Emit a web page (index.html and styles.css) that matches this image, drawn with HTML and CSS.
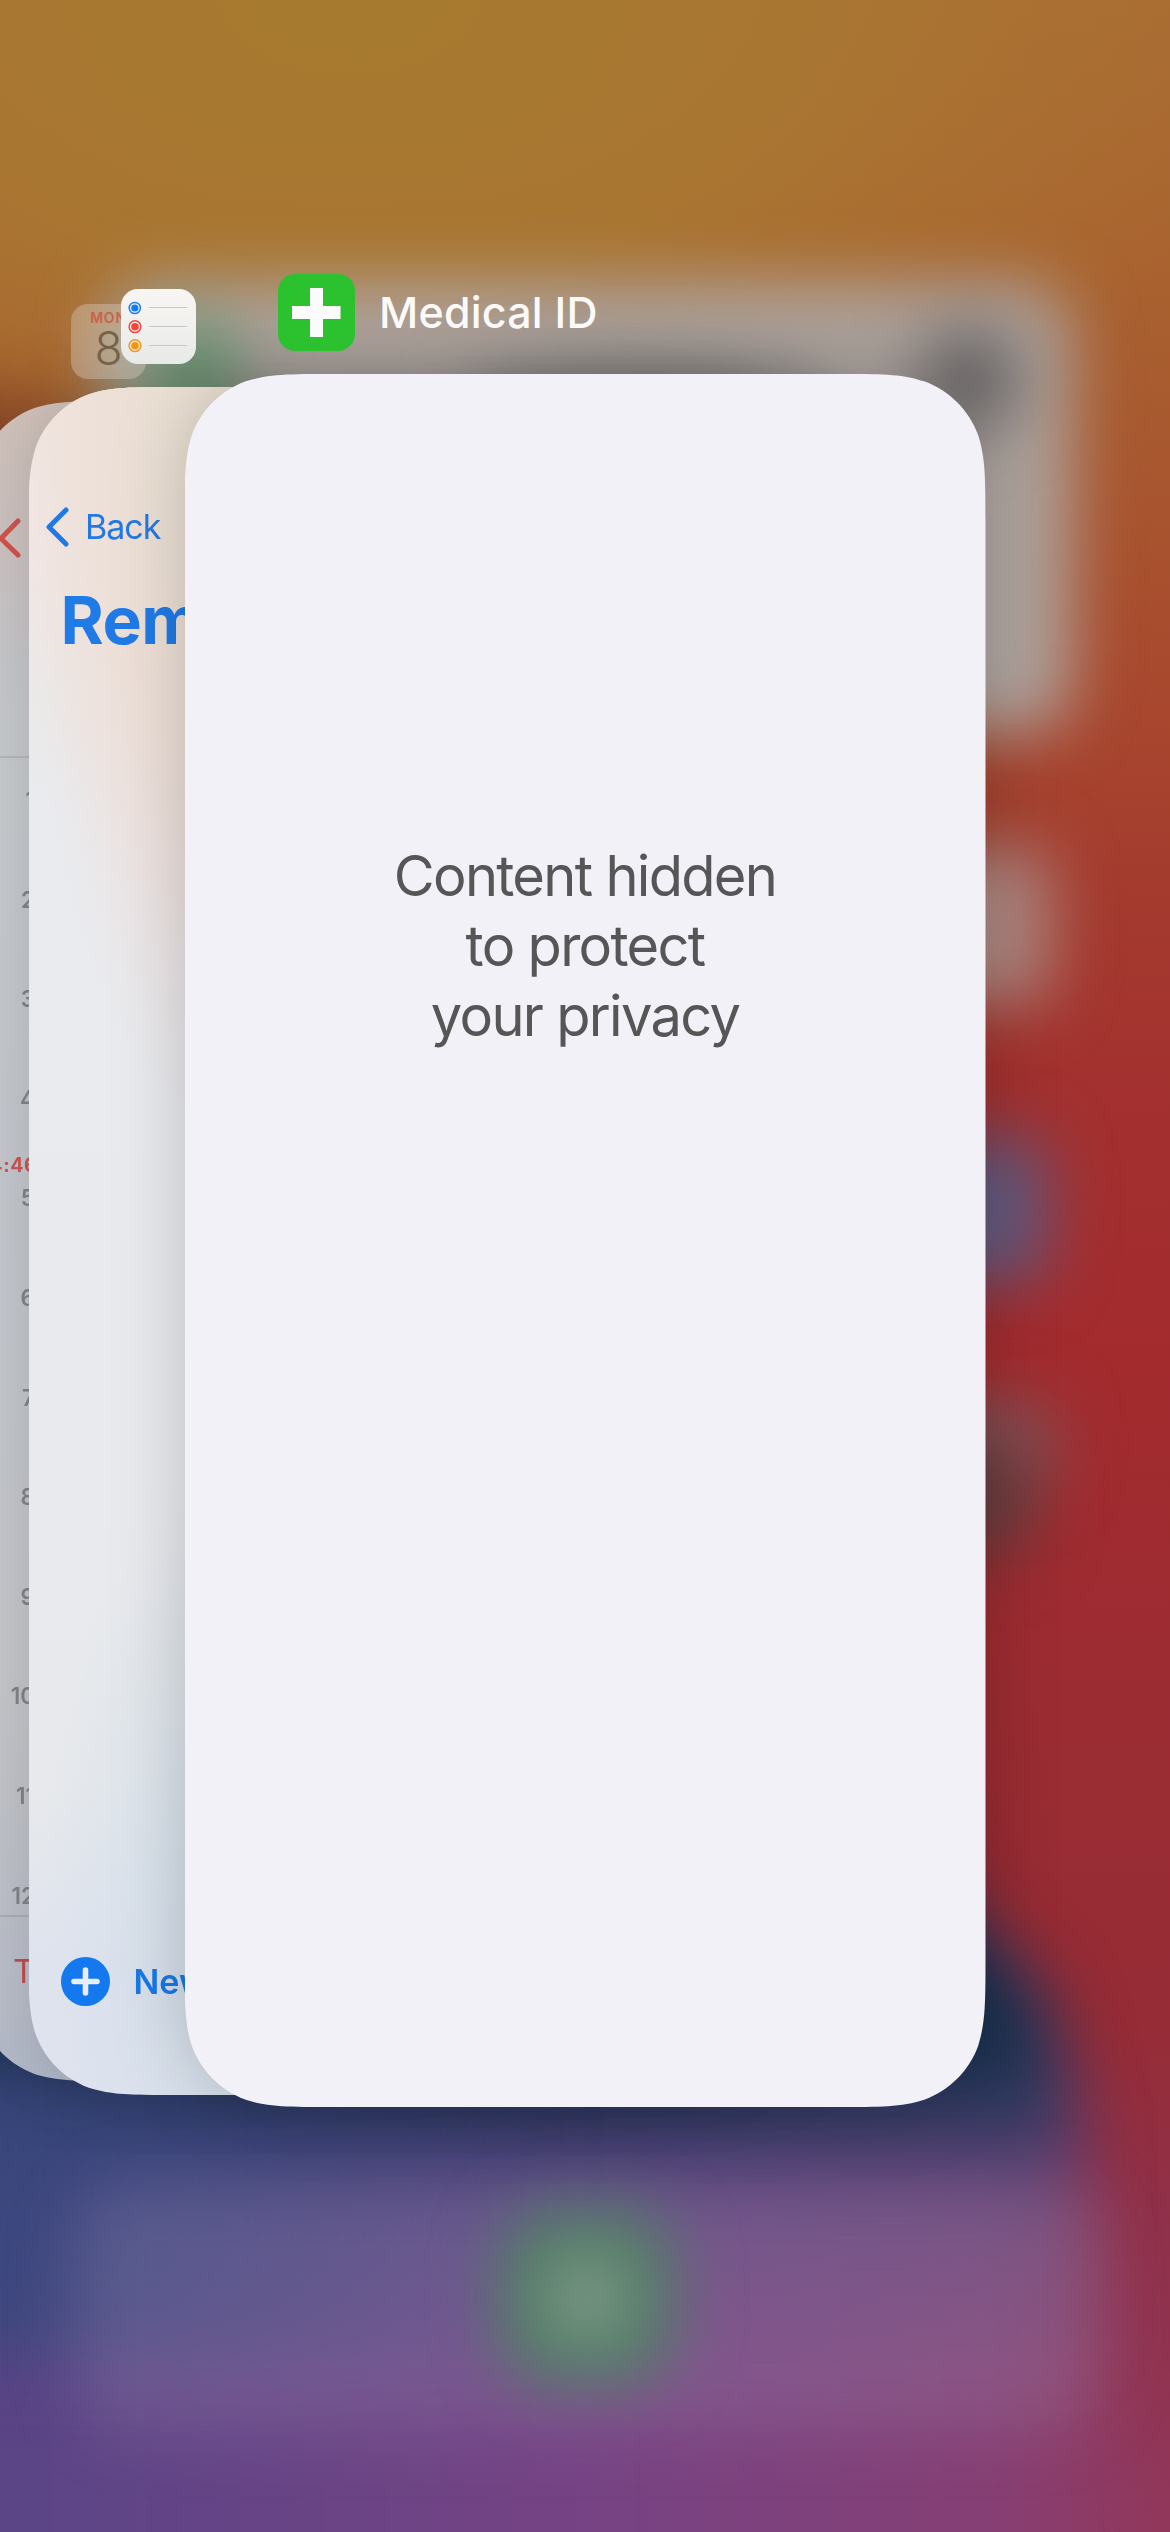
FILE: index.html
```html
<!DOCTYPE html>
<html lang="en">
<head>
<meta charset="utf-8">
<title>App Switcher</title>
<link rel="stylesheet" href="styles.css">
</head>
<body>
<main class="switcher">
  <svg class="wallpaper" viewBox="0 0 1170 2532" aria-hidden="true">
    <defs>
      <clipPath id="card-shape" clipPathUnits="objectBoundingBox">
        <path transform="scale(.00124844 .00057703)" d="M148.3 0H652.7C695.4 0 716.8 0 736 6.4L739.7 7.3C764.8 16.4 784.6 36.2 793.7 61.3C801 84.2 801 105.6 801 148.3V1584.7C801 1627.4 801 1648.8 793.7 1671.7C784.6 1696.8 764.8 1716.6 739.7 1725.7C716.8 1733 695.4 1733 652.7 1733H148.3C105.6 1733 84.2 1733 61.3 1725.7C36.2 1716.6 16.4 1696.8 7.3 1671.7C0 1648.8 0 1627.4 0 1584.7V148.3C0 105.6 0 84.2 7.3 61.3C16.4 36.2 36.2 16.4 61.3 7.3C84.2 0 105.6 0 148.3 0Z"/>
      </clipPath>
      <filter id="soft" x="-100%" y="-100%" width="300%" height="300%" color-interpolation-filters="sRGB"><feGaussianBlur stdDeviation="32"/></filter>
      <filter id="softer" x="-50%" y="-50%" width="200%" height="200%" color-interpolation-filters="sRGB"><feGaussianBlur stdDeviation="34"/></filter>
      <linearGradient id="base" x1="0" y1="0" x2="0" y2="1">
        <stop offset="0" stop-color="#a96c33"/><stop offset=".1" stop-color="#a9632f"/><stop offset=".2" stop-color="#a8552f"/><stop offset=".28" stop-color="#a8472e"/><stop offset=".35" stop-color="#a43b2e"/><stop offset=".43" stop-color="#a3312f"/><stop offset=".54" stop-color="#a32b2e"/><stop offset=".66" stop-color="#9c2c32"/><stop offset=".8" stop-color="#962c36"/><stop offset=".88" stop-color="#90314b"/><stop offset="1" stop-color="#923759"/>
      </linearGradient>
      <radialGradient id="gold" gradientUnits="userSpaceOnUse" cx="0" cy="0" r="1" gradientTransform="translate(350 0) scale(940 560)">
        <stop offset="0" stop-color="#a67b2f"/><stop offset=".5" stop-color="#a97732" stop-opacity=".9"/><stop offset="1" stop-color="#aa7333" stop-opacity="0"/>
      </radialGradient>
      <linearGradient id="floor" gradientUnits="userSpaceOnUse" x1="0" y1="0" x2="1170" y2="0">
        <stop offset="0" stop-color="#5a4587"/><stop offset=".5" stop-color="#764384"/><stop offset=".85" stop-color="#863f74"/><stop offset="1" stop-color="#923759"/>
      </linearGradient>
      <linearGradient id="dusk" gradientUnits="userSpaceOnUse" x1="0" y1="2030" x2="0" y2="2400">
        <stop offset="0" stop-color="#15304c"/><stop offset=".2" stop-color="#24385c" stop-opacity=".9"/><stop offset=".45" stop-color="#37467a" stop-opacity=".38"/><stop offset="1" stop-color="#40477c" stop-opacity="0"/>
      </linearGradient>
      <linearGradient id="blue" gradientUnits="userSpaceOnUse" x1="0" y1="0" x2="560" y2="0">
        <stop offset="0" stop-color="#39487e" stop-opacity=".85"/><stop offset="1" stop-color="#39487e" stop-opacity="0"/>
      </linearGradient>
    </defs>
    <rect width="1170" height="2532" fill="url(#base)"/>
    <rect width="1170" height="600" fill="url(#gold)"/>
    <ellipse cx="-40" cy="530" rx="120" ry="140" fill="#743523" filter="url(#softer)" opacity=".65"/>
    <path d="M-150 1700H860L945 1915L1030 2010L1072 2120L1095 2400L1330 2700H-150Z" fill="url(#floor)" filter="url(#softer)"/>
    <path d="M-150 1700H870L945 1895L1044 1995L1076 2110L1095 2500H-150Z" fill="url(#dusk)" filter="url(#softer)"/>
    <rect x="-200" y="2060" width="760" height="290" fill="url(#blue)" filter="url(#softer)"/>
    <g filter="url(#soft)">
      <rect x="72" y="2182" width="1036" height="250" rx="60" fill="#a89fc0" fill-opacity=".22"/>
    </g>
    <rect x="500" y="2210" width="172" height="172" rx="50" fill="#4e8062" filter="url(#soft)"/>
    <circle cx="587" cy="2298" r="44" fill="#929f99" opacity=".75" filter="url(#soft)"/>
    <rect x="106" y="284" width="964" height="450" rx="50" fill="#aea5a0" filter="url(#soft)"/>
    <circle cx="190" cy="370" r="54" fill="#64906d" filter="url(#soft)"/>
    <ellipse cx="650" cy="398" rx="190" ry="40" fill="#827f7c" filter="url(#soft)"/>
    <circle cx="970" cy="378" r="54" fill="#696566" filter="url(#soft)"/>
    <rect x="900" y="848" width="150" height="156" rx="30" fill="#ab8882" filter="url(#soft)"/>
    <rect x="880" y="1138" width="166" height="145" rx="30" fill="#5f5a80" filter="url(#soft)"/>
    <rect x="880" y="1400" width="174" height="90" rx="30" fill="#855358" filter="url(#soft)"/>
    <rect x="880" y="1445" width="152" height="112" rx="30" fill="#633c3e" filter="url(#soft)"/>
  </svg>

  <section class="layer layer-back">
    <div class="card calendar">
      <header class="cal-nav">
        <svg class="chevron" viewBox="0 0 24 40"><path d="M21 3L4 20.500L21 37"/></svg>
      </header>
      <ol class="hours">
        <li>1</li><li>2</li><li>3</li><li>4</li><li>5</li><li>6</li><li>7</li><li>8</li><li>9</li><li>10</li><li>11</li><li>12</li>
      </ol>
      <span class="now">4:46</span>
      <footer class="cal-foot">Today</footer>
    </div>
  </section>

  <section class="layer layer-mid">
    <div class="card reminders">
      <header class="rem-nav">
        <svg class="chevron" viewBox="0 0 24 40"><path d="M21 3L4 20L21 37"/></svg>
        <span>Back</span>
      </header>
      <h1 class="rem-title">Reminders</h1>
      <footer class="rem-foot">
        <svg class="plus" viewBox="0 0 49 49"><circle cx="24.500" cy="24.500" r="24.500" fill="#1479ee"/><path d="M13 24.500H36M24.500 13V36" stroke="#e9eef6" stroke-width="5.600" stroke-linecap="round"/></svg>
        <span>New Reminder</span>
      </footer>
    </div>
  </section>

  <section class="layer layer-front">
    <div class="card privacy">
      <p>Content hidden<br>to protect<br>your privacy</p>
    </div>
  </section>

  <div class="app-icon icon-calendar"><span class="weekday">MON</span><span class="day">8</span></div>
  <svg class="app-icon icon-reminders" viewBox="0 0 75 75" aria-hidden="true">
    <defs><linearGradient id="paper" x1="0" y1="0" x2="0" y2="1"><stop offset="0" stop-color="#f8f6f3"/><stop offset="1" stop-color="#e8eae8"/></linearGradient></defs>
    <rect width="75" height="75" rx="17" fill="url(#paper)"/>
    <g fill="none" stroke-width="1.500">
      <circle cx="13.800" cy="19" r="5.600" stroke="#1a7df2"/><circle cx="14" cy="37.700" r="5.900" stroke="#f04840"/><circle cx="14" cy="56.700" r="5.900" stroke="#ee9820"/>
    </g>
    <circle cx="13.800" cy="19" r="3.600" fill="#0f7df8"/><circle cx="14" cy="37.700" r="3.800" fill="#fa4236"/><circle cx="14" cy="56.700" r="3.800" fill="#f59412"/>
    <path d="M28 18.500H66M28 37.500H66M28 56.500H66" stroke="#c6c8c9" stroke-width="1.100"/>
  </svg>
  <header class="app-label">
    <svg class="medical" viewBox="0 0 77 77" aria-hidden="true">
      <rect width="77" height="77" rx="17" fill="#2cc22f"/>
      <path d="M32 14H45V32H62.500V45H45V63H32V45H14V32H32Z" fill="#fbfbfb"/>
    </svg>
    <span>Medical ID</span>
  </header>
</main>
</body>
</html>
```
FILE: styles.css
```css
* { box-sizing: border-box; }
body { margin: 0; font-family: Inter, "Liberation Sans", sans-serif; }
.switcher { position: relative; width: 1170px; height: 2532px; overflow: hidden; }
.wallpaper { display: block; width: 100%; height: 100%; }

/* Overlapping deck of app cards */
.layer { position: absolute; }
.layer-back { left: -25px; top: 401px; width: 777px; height: 1680px; filter: drop-shadow(0 0 36px rgba(0,0,0,.13)); }
.layer-mid { left: 28.500px; top: 387px; width: 789px; height: 1708px; filter: drop-shadow(0 0 30px rgba(0,0,0,.13)); }
.layer-front { left: 184.500px; top: 374px; width: 801px; height: 1733px; filter: drop-shadow(0 0 36px rgba(0,0,0,.2)); }
.card { width: 100%; height: 100%; display: flex; flex-direction: column; clip-path: url(#card-shape); }
.chevron { width: 24px; height: 40px; fill: none; stroke: currentColor; stroke-width: 5; stroke-linecap: round; stroke-linejoin: round; }

.privacy { background: #f2f1f7; align-items: center; padding-top: 467px; }
.privacy p { margin: 0; font-size: 56px; line-height: 70px; letter-spacing: -1.700px; color: #565656; text-align: center; }

.reminders {
  background:
    radial-gradient(ellipse 190px 420px at 200px 1530px, #d3dfea 0, rgba(211,223,234,0) 100%),
    radial-gradient(ellipse 190px 560px at 180px 20px, #ebe1d3 10%, rgba(235,225,211,0) 100%),
    radial-gradient(ellipse 200px 680px at 190px 60px, #efdedb 50%, rgba(239,222,219,0) 100%),
    linear-gradient(#f0e7e0 0, #f1e7e5 170px, #ebe9e8 300px, #e9ebef 430px, #e9eaee 1100px, #e7e9ec 1400px, #dfe3ee 1580px);
}
.rem-nav { display: flex; align-items: center; gap: 16px; padding: 114px 0 0 16.500px; height: 165px; color: #2379e3; font-size: 34px; letter-spacing: -1px; }
.rem-title { margin: 28px 0 0 32px; font-size: 66px; line-height: 80px; letter-spacing: -.500px; color: #217be6; }
.rem-foot { display: flex; align-items: center; gap: 24px; margin-top: auto; padding: 0 0 89px 32px; font-size: 34px; line-height: 49px; font-weight: 600; color: #1779e9; }
.plus { width: 49px; height: 49px; }

.calendar { background: linear-gradient(#cfc0b8 0, #ccc1c0 140px, #c5c6ca 260px, #c6cacd 400px, #c3c7cd 800px, #c4c5c9 1300px, #b9bdc8 1600px, #aeb6c6); }
.cal-nav { height: 357px; flex: none; padding: 117px 0 0 21.500px; color: #cf534c; border-bottom: 2px solid #b4b6ba; }
.hours { list-style: none; margin: -8px 0 0; padding: 0; width: 60px; height: 1158px; flex: none; text-align: right; color: #808489; font-size: 22.500px; line-height: 99.600px; font-weight: 600; }
.hours li { height: 99.600px; }
.now { position: absolute; left: 14.500px; top: 752px; font-size: 19.500px; line-height: 25px; font-weight: 700; letter-spacing: .500px; color: #cd5553; }
.cal-foot { flex: 1; border-top: 2px solid #a9adb9; padding: 32px 0 0 38px; font-size: 33px; line-height: 44px; color: #c14d52; margin-top: 7px; }

/* App icons and name above the deck */
.app-icon { position: absolute; width: 75px; height: 75px; }
.icon-calendar { left: 71px; top: 304px; display: flex; flex-direction: column; align-items: center; border-radius: 17px; background: rgba(222,214,205,.36); }
.weekday { font-size: 14px; line-height: 16px; margin-top: 6px; font-weight: 600; letter-spacing: .800px; color: #c9634b; }
.day { font-size: 46px; line-height: 46px; margin-top: -1px; font-weight: 300; color: #736349; }
.icon-reminders { left: 121px; top: 289px; }
.app-label { position: absolute; left: 278px; top: 274px; display: flex; align-items: center; gap: 24px; font-size: 43px; font-weight: 500; letter-spacing: .200px; color: #fbfaf9; }
.app-label span { margin-top: -2px; }
.medical { width: 77px; height: 77px; }
```
